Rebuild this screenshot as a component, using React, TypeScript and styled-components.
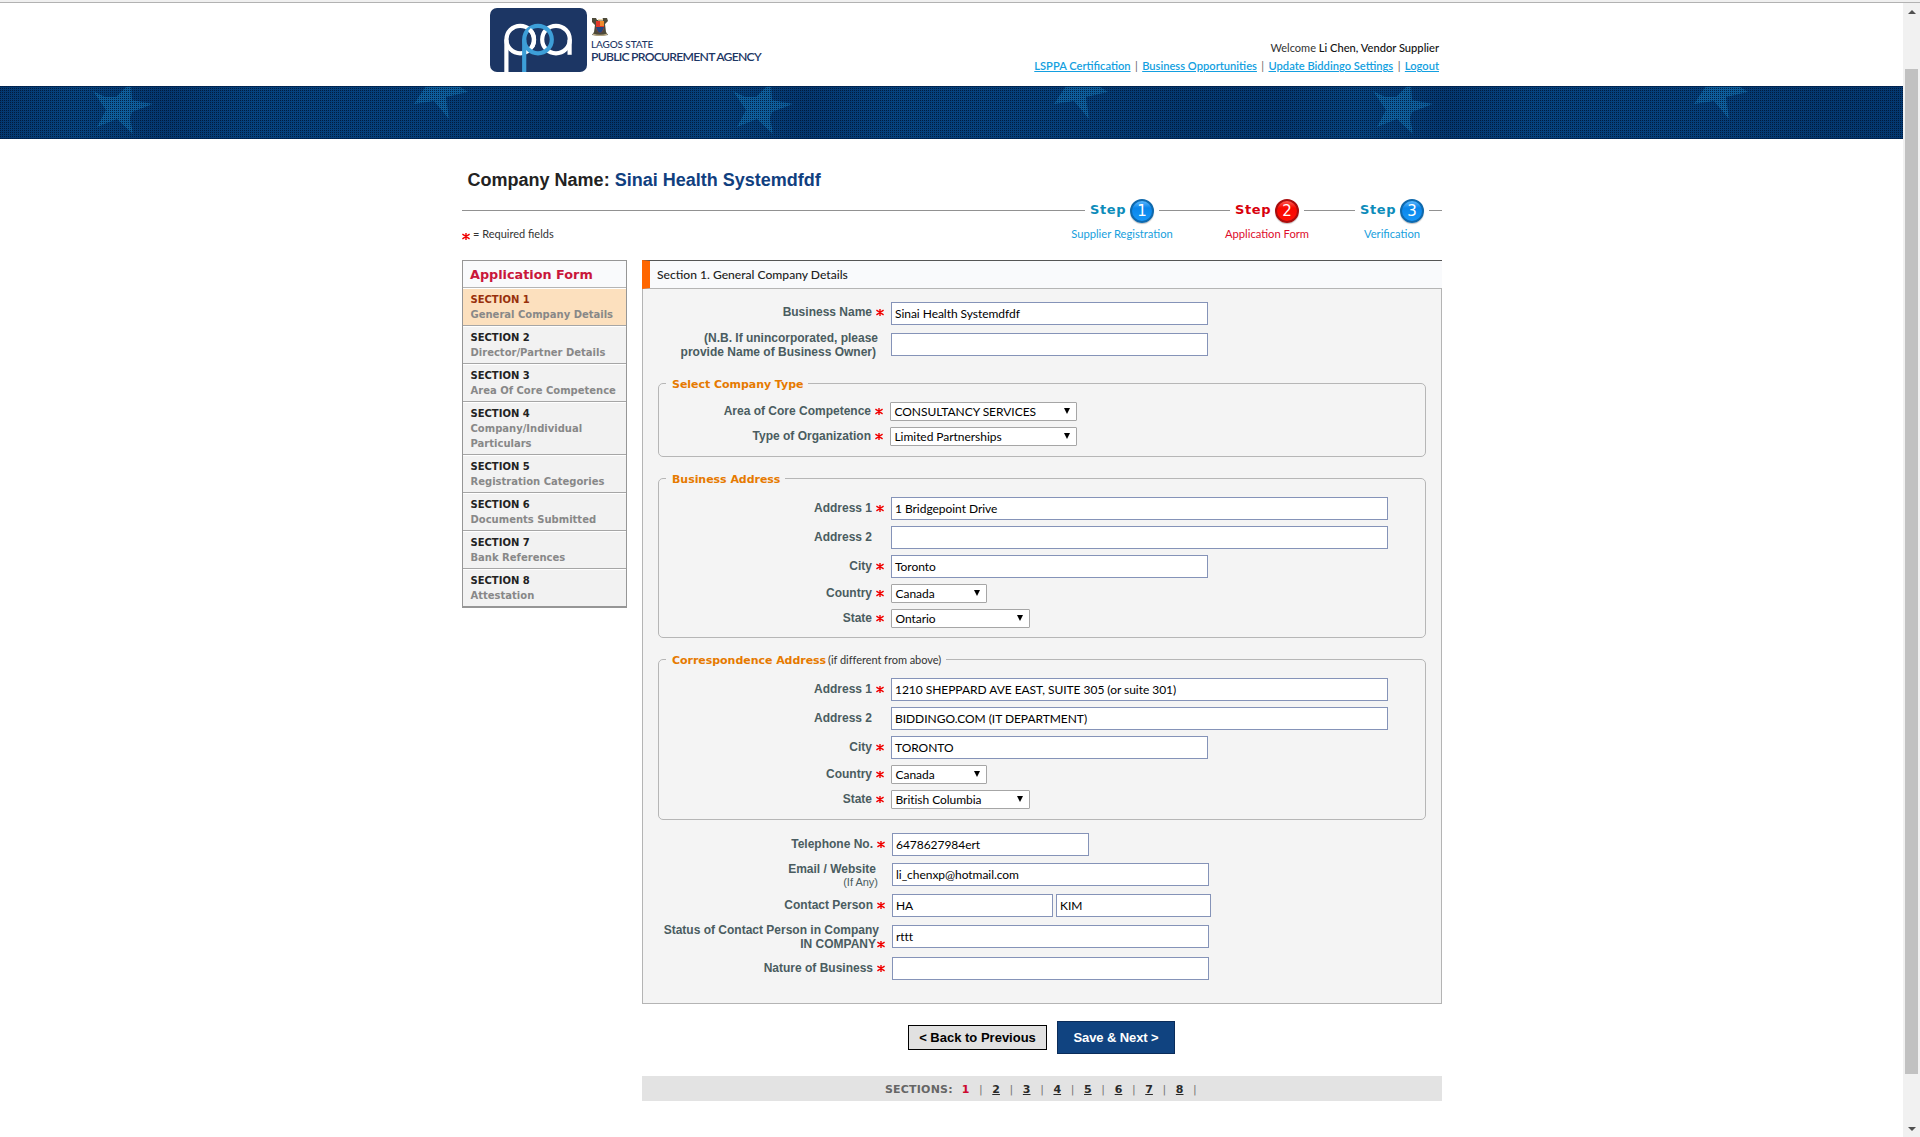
import React from "react";
import styled, { createGlobalStyle, css } from "styled-components";

const verdana = '"DejaVu Sans", sans-serif';
const arial = '"Liberation Sans", sans-serif';
const lato = 'Lato, sans-serif';

const GlobalStyle = createGlobalStyle`
  * { box-sizing: border-box; }
  html, body { margin: 0; padding: 0; background: #fff; }
  body { font-family: ${lato}; font-size: 12px; color: #333; overflow: hidden; }
`;

const Screen = styled.div`
  display: flex;
  flex-direction: column;
  width: 1920px;
  height: 1137px;
`;
const ChromeEdge = styled.div`
  height: 3px;
  flex: none;
  background: #f0f0f0;
  border-bottom: 1px solid #b2b2b2;
`;
const Viewport = styled.div`
  display: flex;
  flex: 1;
`;
const Page = styled.div`
  width: 1903px;
`;
const ScrollBar = styled.div`
  width: 17px;
  display: flex;
  flex-direction: column;
  align-items: center;
  background: #f1f1f1;
`;
const ScrollArrow = styled.div<{ $down?: boolean }>`
  height: 17px;
  display: flex;
  align-items: center;
  &::before {
    content: "";
    border: 4px solid transparent;
    ${(p) => (p.$down ? "border-top-color: #505050; border-bottom: 0;" : "border-bottom-color: #505050; border-top: 0;")}
  }
`;
const Thumb = styled.div`
  width: 13px;
  height: 1005px;
  margin-top: 49px;
  margin-bottom: auto;
  background: #c1c1c1;
`;

const Container = styled.div`
  width: 980px;
  margin-left: 462px;
`;
const Header = styled(Container)`
  height: 83px;
  display: flex;
  justify-content: space-between;
`;
const Brand = styled.div`
  display: flex;
  padding: 5px 0 0 28px;
`;
const BrandText = styled.div`
  display: flex;
  flex-direction: column;
  padding: 9px 0 0 4px;
  color: #1c3664;
  white-space: nowrap;
`;
const State = styled.div`
  font: 500 10px/10px ${lato};
  margin-top: 3px;
  letter-spacing: -0.12px;
`;
const Agency = styled.div`
  font: 600 12.2px/15px ${lato};
  letter-spacing: -0.75px;
`;
const Account = styled.div`
  padding: 36px 3px 0 0;
  text-align: right;
  line-height: 18px;
  font-size: 11px;
`;
const Name = styled.span`
  font-size: 11.15px;
  font-weight: 500;
  color: #111;
`;
const Nav = styled.div`
  display: flex;
  justify-content: flex-end;
  font-size: 11.15px;
  white-space: pre;
`;
const NavLink = styled.a`
  color: #139fe0;
  font-weight: 600;
  text-decoration: underline;
`;
const Pipe = styled.span`
  width: 11.6px;
  text-align: center;
  color: #666;
`;
const Banner = styled.svg`
  display: block;
`;

const CompanyTitle = styled.h1`
  margin: 30px 0 0;
  padding-left: 5.6px;
  font: bold 18px/22px ${arial};
  color: #222;
`;
const CompanyName = styled.span`
  color: #10407f;
`;
const Stepper = styled.div`
  display: flex;
  height: 61px;
  margin-top: 8px;
`;
const StepLead = styled.div`
  width: 623px;
  margin-right: 5px;
`;
const Track = styled.div<{ $w: number; $l?: number; $r?: number }>`
  width: ${(p) => p.$w}px;
  flex: none;
  height: 1px;
  margin: 11px ${(p) => p.$r ?? 0}px 0 ${(p) => p.$l ?? 0}px;
  background: #919191;
`;
const Required = styled.div`
  display: flex;
  margin: 15px 0 0 0;
  font-size: 11px;
  line-height: 16px;
  svg { margin: 7px 3px 0 0; }
`;
const Step = styled.div<{ $active?: boolean }>`
  width: 64px;
  flex: none;
  display: flex;
  flex-direction: column;
  align-items: center;
  white-space: nowrap;
  font-size: 11.2px;
  line-height: 16px;
  color: ${(p) => (p.$active ? "#dd0c2c" : "#17a0dd")};
`;
const StepHead = styled.div<{ $active?: boolean }>`
  width: 64px;
  height: 24px;
  margin-bottom: 3px;
  display: flex;
  align-items: center;
  justify-content: space-between;
  font: bold 13px/22px ${verdana};
  letter-spacing: 0.6px;
  color: ${(p) => (p.$active ? "#d8000c" : "#0c8cba")};
`;
const StepWord = styled.span`
  height: 24px;
`;
const Ball = styled.span<{ $active?: boolean }>`
  width: 24px;
  height: 24px;
  border-radius: 50%;
  text-align: center;
  font: 15px/20px ${verdana};
  letter-spacing: 0;
  color: #fff;
  border: 2px solid ${(p) => (p.$active ? "#a80d0d" : "#0f69ad")};
  background: ${(p) =>
    p.$active
      ? "linear-gradient(#ff5a50, #f80800 35%, #ff1008)"
      : "linear-gradient(#5cb8ff, #0a86ea 35%, #1797f8)"};
  box-shadow: 0 1px 1px rgba(0, 0, 0, 0.25);
`;

const Columns = styled.div`
  display: flex;
  align-items: flex-start;
  gap: 15px;
`;
const Sidebar = styled.div`
  width: 165px;
  border: 1px solid #969696;
  border-bottom-width: 2px;
  font-family: ${verdana};
  font-weight: bold;
`;
const SideTitle = styled.div`
  height: 27px;
  padding-left: 7px;
  background: #f9fafc;
  border-bottom: 1px solid #b5b5b5;
  font-size: 12.8px;
  line-height: 28px;
  color: #c9163a;
`;
const SideItem = styled.div<{ $active?: boolean }>`
  padding: 3px 0 3px 7.5px;
  border-top: 1px solid #fff;
  border-bottom: 1px solid #a6a6a6;
  &:last-child { border-bottom: 0; }
  background: ${(p) => (p.$active ? "#fce0be" : "#f2f2f2")};
  font-size: 10px;
  line-height: 15px;
  white-space: pre-line;
  color: #888;
  strong { display: block; color: ${(p) => (p.$active ? "#98300c" : "#222")}; }
`;

const Main = styled.div`
  width: 800px;
`;
const Panel = styled.div`
  height: 744px;
  border: 1px solid #b4b4b4;
  border-top: 0;
  background: #f4f4f4;
`;
const PanelHead = styled.div`
  height: 29px;
  margin: 0 -1px;
  padding-left: 7px;
  border-top: 1px solid #555;
  border-bottom: 1px solid #b5b5b5;
  border-left: 8px solid #ff6600;
  background: #f9fafc;
  font-size: 12.1px;
  font-weight: 500;
  line-height: 28px;
  color: #222;
`;
const Group = styled.fieldset<{ $mt: number; $h: number }>`
  width: 768px;
  height: ${(p) => p.$h}px;
  margin: ${(p) => p.$mt}px 0 0 15px;
  padding: 0;
  border: 1px solid #b6b6b6;
  border-radius: 5px;
`;
const Legend = styled.legend`
  margin-left: 7px;
  padding: 0 5px 0 6px;
  height: 15px;
  font: bold 11px/17px ${verdana};
  letter-spacing: -0.04px;
  color: #e67a00;
  white-space: nowrap;
`;
const LegendNote = styled.span`
  font: 11px/15px ${lato};
  color: #333;
  margin-left: 2px;
`;
const Row = styled.div<{ $mt: number; $h?: number }>`
  display: flex;
  height: ${(p) => p.$h ?? 23}px;
  margin-top: ${(p) => p.$mt}px;
`;
const Label = styled.div<{ $w: number; $top: number; $end: number }>`
  width: ${(p) => p.$w}px;
  flex: none;
  margin-top: ${(p) => p.$top}px;
  padding-right: ${(p) => p.$end}px;
  text-align: right;
  font: bold 12px/14px ${arial};
  color: #4a5c60;
  white-space: nowrap;
`;
const Line = styled.div<{ $inset?: number }>`
  padding-right: ${(p) => p.$inset ?? 0}px;
`;
const Small = styled.div`
  font: 11px/13px ${arial};
  margin-right: -2px;
`;
const control = css`
  flex: none;
  background: #fff;
  color: #000;
  font: 12px/21px ${lato};
  letter-spacing: -0.04px;
  white-space: nowrap;
`;
const Field = styled.div<{ $w: number }>`
  ${control}
  width: ${(p) => p.$w}px;
  height: 23px;
  padding: 0 0 0 3px;
  border: 1px solid #8593b8;
  & + & { margin-left: 3px; }
`;
const SelectBox = styled.div<{ $w: number }>`
  ${control}
  width: ${(p) => p.$w}px;
  height: 19px;
  display: flex;
  justify-content: space-between;
  padding: 0 6px 0 3.5px;
  line-height: 18px;
  border: 1px solid #a6a6a6;
  border-radius: 1px;
  &::after {
    content: "";
    margin-top: 5px;
    height: 0;
    border: 3px solid transparent;
    border-top: 6px solid #000;
    border-bottom: 0;
  }
`;

const Buttons = styled.div`
  display: flex;
  align-items: center;
  gap: 10px;
  margin: 17px 0 0 266px;
`;
const Button = styled.button<{ $primary?: boolean }>`
  padding: 0;
  font: bold 13px/16px ${arial};
  ${(p) =>
    p.$primary
      ? "width: 118px; height: 33px; color: #fff; background: #104380; border: 1px solid #0a2c5a; letter-spacing: -0.1px;"
      : "width: 139px; height: 25px; color: #000; background: #e1e1e1; border: 1px solid #000;"}
`;
const Pager = styled.div`
  display: flex;
  height: 25px;
  margin-top: 22px;
  padding-left: 243px;
  background: #e3e3e3;
  font: bold 11px/27px ${verdana};
  color: #666;
`;
const PagerTitle = styled.span`
  width: 73px;
  letter-spacing: 0.2px;
`;
const PageNo = styled.span<{ $active?: boolean }>`
  width: 15px;
  text-align: center;
  color: ${(p) => (p.$active ? "#cc0a2f" : "#2a2a2a")};
  text-decoration: ${(p) => (p.$active ? "none" : "underline")};
`;
const PagerPipe = styled.span`
  width: 15.6px;
  text-align: center;
  font-weight: normal;
  color: #777;
`;
const InlineStar = styled.svg<{ $gap: number }>`
  margin-left: ${(p) => p.$gap}px;
`;

/* Red asterisk that marks a mandatory field */
const Star = ({ gap = 4 }: { gap?: number }) => (
  <InlineStar $gap={gap} width="8" height="7" viewBox="0 0 8 7" stroke="#f00000" strokeWidth="1.4" fill="none">
    <path d="M4 0V7M0.4 1.2L7.6 5.8M7.6 1.2L0.4 5.8" />
  </InlineStar>
);

const Logo = () => (
  <svg width="97" height="64" viewBox="0 0 97 64" fill="none" strokeWidth="4.2">
    <rect width="97" height="64" rx="7" fill="#1c3664" />
    <circle cx="30.2" cy="31.6" r="13.8" stroke="#fff" />
    <path d="M16.4 31.6V64" stroke="#fff" />
    <circle cx="66" cy="31.6" r="13.8" stroke="#fff" />
    <path d="M79.6 31.6V46.8" stroke="#fff" />
    <circle cx="48" cy="31.6" r="13.8" stroke="#3d9fd8" />
    <path d="M34.2 31.6V64" stroke="#3d9fd8" />
    <path d="M39.5 21.5A13.8 13.8 0 0 1 42 39" stroke="#fff" />
  </svg>
);

const Crest = () => (
  <svg width="18" height="19" viewBox="0 0 18 19">
    <path d="M1 1h4l1 2h5l1-2h4l1 3-3 3 1 8 2 3-8 1-8-1 2-3 1-7-3-3z" fill="#4d4a3a" />
    <path d="M5 4h8v7q-1 4-4 5-3-1-4-5z" fill="#e1382a" />
    <path d="M9 4h4v5H9z" fill="#f08a2c" />
    <path d="M5 10h8q-1 5-4 6-3-1-4-6z" fill="#24477d" />
    <path d="M7 2h5v1.6H7z" fill="#e9d9b0" />
    <path d="M2 16.500q7 2.500 14 0v1.500q-7 2-14 0z" fill="#b9a982" />
  </svg>
);

const tiles = [0, 640, 1280];

const StarBanner = () => (
  <Banner width="1903" height="53" viewBox="0 0 1903 53">
    <defs>
      <linearGradient id="shade" x1="0" x2="640" y1="0" y2="0" gradientUnits="userSpaceOnUse" spreadMethod="repeat">
        <stop offset="0" stopColor="#043870" />
        <stop offset="0.12" stopColor="#06437e" />
        <stop offset="0.26" stopColor="#04376f" />
        <stop offset="0.4" stopColor="#05427e" />
        <stop offset="0.65" stopColor="#053f7a" />
        <stop offset="0.85" stopColor="#04386f" />
        <stop offset="1" stopColor="#043870" />
      </linearGradient>
      <pattern id="mesh" width="2" height="2" patternUnits="userSpaceOnUse">
        <rect width="1" height="1" fill="#001330" fillOpacity="0.8" />
      </pattern>
    </defs>
    <rect width="1903" height="53" fill="url(#shade)" />
    {tiles.map((x) => (
      <g key={x} transform={`translate(${x} 0)`} fill="#126aa8" fillOpacity="0.75">
        <path d="M93 5L105 11L116 11L127 0H131L132 14L153 18L132 26L130 32L133 48L117 33L97 41L106 24Z" />
        <path d="M426 0H459L468 6L446 11L449 33L434 15L414 18Z" />
      </g>
    ))}
    <rect width="1903" height="53" fill="url(#mesh)" />
    <path d="M0 .5H1903M0 52.500H1903" stroke="#00204a" strokeOpacity="0.7" />
  </Banner>
);

type LabelProps = { text: string; w: number; top: number; required?: boolean };
const RowLabel = ({ text, w, top, required = true }: LabelProps) => (
  <Label $w={w} $top={top} $end={required ? 7 : 19}>
    {text}
    {required && <Star />}
  </Label>
);

type Address = { line1: string; line2: string; city: string; country: string; state: string };
const AddressRows = ({ line1, line2, city, country, state }: Address) => (
  <>
    <Row $mt={11}><RowLabel text="Address 1" w={232} top={4} /><Field $w={497}>{line1}</Field></Row>
    <Row $mt={6}><RowLabel text="Address 2" w={232} top={4} required={false} /><Field $w={497}>{line2}</Field></Row>
    <Row $mt={6}><RowLabel text="City" w={232} top={4} /><Field $w={317}>{city}</Field></Row>
    <Row $mt={6} $h={19}><RowLabel text="Country" w={232} top={2} /><SelectBox $w={96}>{country}</SelectBox></Row>
    <Row $mt={6} $h={19}><RowLabel text="State" w={232} top={2} /><SelectBox $w={139}>{state}</SelectBox></Row>
  </>
);

const sections = [
  "General Company Details",
  "Director/Partner Details",
  "Area Of Core Competence",
  "Company/Individual\nParticulars",
  "Registration Categories",
  "Documents Submitted",
  "Bank References",
  "Attestation",
];
const links = ["LSPPA Certification", "Business Opportunities", "Update Biddingo Settings", "Logout"];

const StepMark = ({ n, title, active }: { n: number; title: string; active?: boolean }) => (
  <Step $active={active}>
    <StepHead $active={active}>
      <StepWord>Step</StepWord>
      <Ball $active={active}>{n}</Ball>
    </StepHead>
    {title}
  </Step>
);

export default function App() {
  return (
    <Screen>
      <GlobalStyle />
      <ChromeEdge />
      <Viewport>
        <Page>
          <Header>
            <Brand>
              <Logo />
              <BrandText>
                <Crest />
                <State>LAGOS STATE</State>
                <Agency>PUBLIC PROCUREMENT AGENCY</Agency>
              </BrandText>
            </Brand>
            <Account>
              Welcome <Name>Li Chen, Vendor Supplier</Name>
              <Nav>
                {links.map((l, i) => (
                  <React.Fragment key={l}>
                    {i > 0 && <Pipe>|</Pipe>}
                    <NavLink>{l}</NavLink>
                  </React.Fragment>
                ))}
              </Nav>
            </Account>
          </Header>
          <StarBanner />
          <Container>
            <CompanyTitle>Company Name: <CompanyName>Sinai Health Systemdfdf</CompanyName></CompanyTitle>
            <Stepper>
              <StepLead>
                <Track $w={623} />
                <Required><Star gap={0} />= Required fields</Required>
              </StepLead>
              <StepMark n={1} title="Supplier Registration" />
              <Track $w={71} $l={5} $r={5} />
              <StepMark n={2} title="Application Form" active />
              <Track $w={51} $l={5} $r={5} />
              <StepMark n={3} title="Verification" />
              <Track $w={13} $l={5} />
            </Stepper>
            <Columns>
              <Sidebar>
                <SideTitle>Application Form</SideTitle>
                {sections.map((s, i) => (
                  <SideItem key={s} $active={i === 0}>
                    <strong>SECTION {i + 1}</strong>
                    {s}
                  </SideItem>
                ))}
              </Sidebar>
              <Main>
                <Panel>
                  <PanelHead>Section 1. General Company Details</PanelHead>
                  <Row $mt={13}><RowLabel text="Business Name" w={248} top={3} /><Field $w={317}>Sinai Health Systemdfdf</Field></Row>
                  <Row $mt={8}>
                    <Label $w={248} $top={-2} $end={13}>
                      <Line>(N.B. If unincorporated, please</Line>
                      <Line $inset={2}>provide Name of Business Owner)</Line>
                    </Label>
                    <Field $w={317} />
                  </Row>
                  <Group $mt={20} $h={81}>
                    <Legend>Select Company Type</Legend>
                    <Row $mt={11} $h={19}><RowLabel text="Area of Core Competence" w={231} top={2} /><SelectBox $w={187}>CONSULTANCY SERVICES</SelectBox></Row>
                    <Row $mt={6} $h={19}><RowLabel text="Type of Organization" w={231} top={2} /><SelectBox $w={187}>Limited Partnerships</SelectBox></Row>
                  </Group>
                  <Group $mt={14} $h={167}>
                    <Legend>Business Address</Legend>
                    <AddressRows line1="1 Bridgepoint Drive" line2="" city="Toronto" country="Canada" state="Ontario" />
                  </Group>
                  <Group $mt={14} $h={168}>
                    <Legend>Correspondence Address<LegendNote>(if different from above)</LegendNote></Legend>
                    <AddressRows
                      line1="1210 SHEPPARD AVE EAST, SUITE 305 (or suite 301)"
                      line2="BIDDINGO.COM (IT DEPARTMENT)"
                      city="TORONTO"
                      country="Canada"
                      state="British Columbia"
                    />
                  </Group>
                  <Row $mt={13}><RowLabel text="Telephone No." w={249} top={4} /><Field $w={197}>6478627984ert</Field></Row>
                  <Row $mt={7}>
                    <Label $w={249} $top={-1} $end={16}>
                      Email / Website
                      <Small>(If Any)</Small>
                    </Label>
                    <Field $w={317}>li_chenxp@hotmail.com</Field>
                  </Row>
                  <Row $mt={8}>
                    <RowLabel text="Contact Person" w={249} top={4} />
                    <Field $w={161}>HA</Field>
                    <Field $w={155}>KIM</Field>
                  </Row>
                  <Row $mt={8}>
                    <Label $w={249} $top={-2} $end={7}>
                      <Line $inset={6}>Status of Contact Person in Company</Line>
                      <Line>IN COMPANY<Star gap={1} /></Line>
                    </Label>
                    <Field $w={317}>rttt</Field>
                  </Row>
                  <Row $mt={9}><RowLabel text="Nature of Business" w={249} top={4} /><Field $w={317} /></Row>
                </Panel>
                <Buttons>
                  <Button>&lt; Back to Previous</Button>
                  <Button $primary>Save &amp; Next &gt;</Button>
                </Buttons>
                <Pager>
                  <PagerTitle>SECTIONS:</PagerTitle>
                  {sections.map((s, i) => (
                    <React.Fragment key={s}>
                      <PageNo $active={i === 0}>{i + 1}</PageNo>
                      <PagerPipe>|</PagerPipe>
                    </React.Fragment>
                  ))}
                </Pager>
              </Main>
            </Columns>
          </Container>
        </Page>
        <ScrollBar>
          <ScrollArrow />
          <Thumb />
          <ScrollArrow $down />
        </ScrollBar>
      </Viewport>
    </Screen>
  );
}
